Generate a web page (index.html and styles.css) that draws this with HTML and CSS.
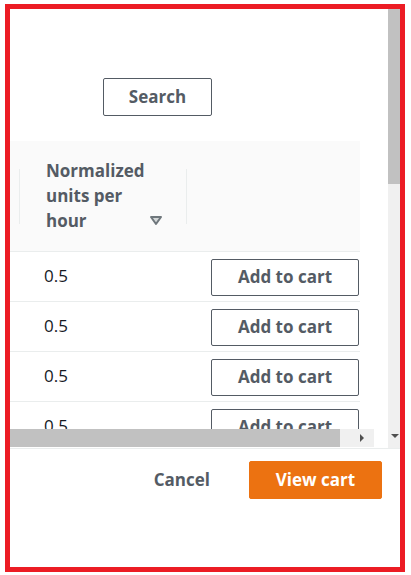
FILE: index.html
```html
<!DOCTYPE html>
<html lang="en">
<head>
<meta charset="utf-8">
<title>Cart</title>
<link rel="stylesheet" href="styles.css">
</head>
<body>
<div class="frame">
  <div class="modal-body">
    <div class="content">
      <div class="toolbar">
        <button class="btn btn-normal btn-search" type="button">Search</button>
      </div>
      <div class="table-wrap">
        <div class="table">
          <div class="thead">
            <div class="th-sep"></div>
            <div class="th th-units">
              <span class="th-label">Normalized units per hour</span>
              <svg class="sort-icon" width="14" height="11" viewBox="0 0 14 11" aria-hidden="true"><polygon points="2,2 12,2 7,9" fill="#d3d7d8" stroke="#6f777c" stroke-width="2" stroke-linejoin="round"/></svg>
            </div>
            <div class="th-sep"></div>
            <div class="th th-action"></div>
          </div>
          <div class="tr"><div class="td td-units">0.5</div><div class="td td-action"><button class="btn btn-normal btn-add" type="button">Add to cart</button></div></div>
          <div class="tr"><div class="td td-units">0.5</div><div class="td td-action"><button class="btn btn-normal btn-add" type="button">Add to cart</button></div></div>
          <div class="tr"><div class="td td-units">0.5</div><div class="td td-action"><button class="btn btn-normal btn-add" type="button">Add to cart</button></div></div>
          <div class="tr"><div class="td td-units">0.5</div><div class="td td-action"><button class="btn btn-normal btn-add" type="button">Add to cart</button></div></div>
        </div>
      </div>
      <div class="hscroll">
        <div class="hscroll-thumb"></div>
        <div class="hscroll-rest"><span class="arrow-right"></span></div>
      </div>
    </div>
    <div class="vscroll">
      <div class="vscroll-thumb"></div>
      <div class="vscroll-track"><span class="arrow-down"></span></div>
    </div>
  </div>
  <div class="footer">
    <button class="btn btn-link" type="button">Cancel</button>
    <button class="btn btn-primary" type="button">View cart</button>
  </div>
</div>
</body>
</html>
```

FILE: styles.css
```css
* { box-sizing: border-box; }

html, body {
  margin: 0;
  padding: 0;
  background: #ffffff;
}

body {
  font-family: "Open Sans", "Noto Sans", "Liberation Sans", sans-serif;
  color: #16191f;
}

.frame {
  margin: 4px 0 0 5px;
  width: 400px;
  height: 568px;
  border: 5px solid #ec1c24;
  display: flex;
  flex-direction: column;
  background: #ffffff;
  overflow: hidden;
}

.modal-body {
  display: flex;
  height: 439px;
  flex: none;
}

.content {
  width: 378px;
  display: flex;
  flex-direction: column;
}

.toolbar {
  height: 132px;
  padding: 69px 0 0 93px;
}

.btn {
  font-family: inherit;
  font-weight: 700;
  font-size: 17px;
  border-radius: 2px;
  cursor: pointer;
  padding: 0 0 2px 0;
  margin: 0;
  line-height: 1;
}

.btn-normal {
  background: #ffffff;
  border: 1px solid #545b64;
  color: #545b64;
}

.btn-search {
  width: 109px;
  height: 38px;
}

.table-wrap {
  width: 364px;
  height: 288px;
  overflow: hidden;
}

.table {
  width: 350px;
}

.thead {
  height: 111px;
  background: #fafafa;
  border-bottom: 1px solid #eaeded;
  display: flex;
  align-items: center;
  padding-left: 9px;
}

.th-sep {
  width: 1px;
  height: 55px;
  background: #eaeded;
  flex: none;
}

.th {
  color: #545b64;
  font-weight: 700;
  font-size: 17px;
  line-height: 25px;
}

.th-units {
  width: 166px;
  padding: 0 24px 2px 26px;
  position: relative;
}

.th-label {
  display: block;
  width: 100px;
}

.sort-icon {
  position: absolute;
  right: 23px;
  bottom: 9px;
}

.th-action {
  flex: 1;
}

.tr {
  height: 50px;
  border-bottom: 1px solid #eaeded;
  display: flex;
  align-items: center;
}

.td-units {
  width: 201px;
  padding: 0 0 2px 34px;
  font-size: 17px;
  color: #16191f;
}

.td-action {
  flex: 1;
}

.btn-add {
  width: 148px;
  height: 37px;
  margin-top: 1px;
}

.hscroll {
  width: 364px;
  height: 18px;
  display: flex;
  background: #f0f0f0;
}

.hscroll-thumb {
  width: 330px;
  background: #c1c1c1;
}

.hscroll-rest {
  flex: 1;
  display: flex;
  align-items: center;
  padding-left: 20px;
}

.arrow-right {
  width: 0;
  height: 0;
  border-top: 4px solid transparent;
  border-bottom: 4px solid transparent;
  border-left: 4px solid #505050;
}

.vscroll {
  width: 12px;
  display: flex;
  flex-direction: column;
  background: #f0f0f0;
}

.vscroll-thumb {
  height: 175px;
  background: #c1c1c1;
}

.vscroll-track {
  flex: 1;
  display: flex;
  align-items: flex-end;
  justify-content: flex-end;
  padding: 0 1px 10px 0;
}

.arrow-down {
  width: 0;
  height: 0;
  border-left: 4px solid transparent;
  border-right: 4px solid transparent;
  border-top: 4px solid #505050;
}

.footer {
  border-top: 1px solid #eaeded;
  display: flex;
  justify-content: flex-end;
  align-items: flex-start;
  padding: 12px 18px 0 0;
  flex: 1;
}

.btn-link {
  background: transparent;
  border: none;
  color: #545b64;
  height: 38px;
  padding: 0 39px 2px 20px;
}

.btn-primary {
  background: #ec7211;
  border: 1px solid #ec7211;
  color: #ffffff;
  width: 133px;
  height: 38px;
}
```
